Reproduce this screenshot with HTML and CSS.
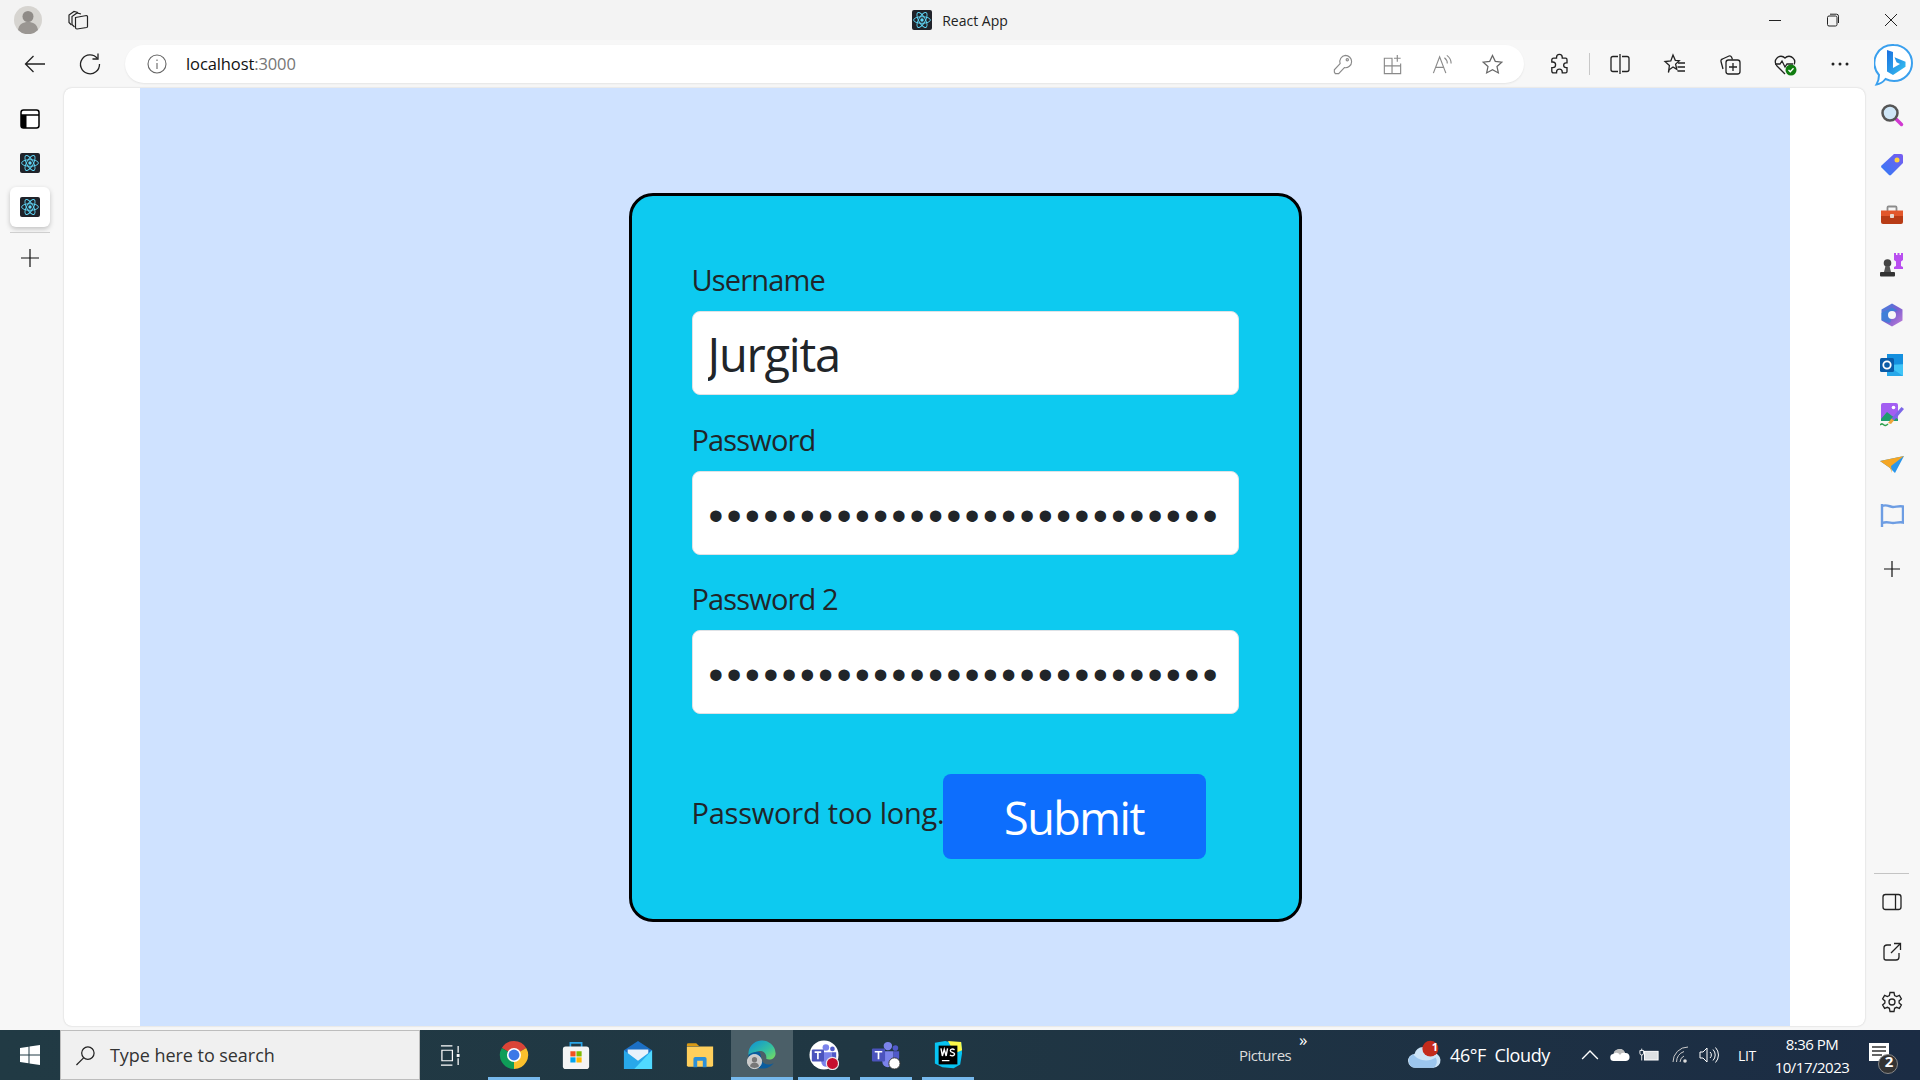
FILE: index.html
```html
<!DOCTYPE html>
<html lang="en">
<head>
<meta charset="utf-8">
<title>React App</title>
<link rel="stylesheet" href="styles.css">
</head>
<body>
<svg class="defs" width="0" height="0" aria-hidden="true">
  <defs>
    <symbol id="react" viewBox="0 0 20 20">
      <rect width="20" height="20" rx="2" fill="#20232a"/>
      <g fill="none" stroke="#61dafb" stroke-width=".9">
        <ellipse cx="10" cy="10" rx="8.4" ry="3.3"/>
        <ellipse cx="10" cy="10" rx="8.4" ry="3.3" transform="rotate(60 10 10)"/>
        <ellipse cx="10" cy="10" rx="8.4" ry="3.3" transform="rotate(120 10 10)"/>
      </g>
      <circle cx="10" cy="10" r="1.7" fill="#61dafb"/>
    </symbol>
    <linearGradient id="bingG" x1="0" y1="0" x2="1" y2="1"><stop offset="0" stop-color="#1b6fe0"/><stop offset="1" stop-color="#36c5f0"/></linearGradient>
    <linearGradient id="edgeG" x1="0" y1="0" x2="1" y2="1"><stop offset="0" stop-color="#0c8fd8"/><stop offset=".6" stop-color="#35c1a0"/><stop offset="1" stop-color="#7fdc5a"/></linearGradient>
    <linearGradient id="mGrad" x1="0" y1="0" x2="1" y2="1"><stop offset="0" stop-color="#3a86e0"/><stop offset=".5" stop-color="#7a5fd0"/><stop offset="1" stop-color="#c57fd8"/></linearGradient>
    <linearGradient id="tagG" x1="0" y1="1" x2="1" y2="0"><stop offset="0" stop-color="#2f7cf6"/><stop offset="1" stop-color="#7a5cf0"/></linearGradient>
  </defs>
</svg>

<header class="titlebar">
  <div class="title-side">
    <svg class="avatar" viewBox="0 0 28 28"><circle cx="14" cy="14" r="14" fill="#d6d4d0"/><circle cx="14" cy="10.5" r="5.5" fill="#8f8b87"/><path d="M4 24c1-6 5-8 10-8s9 2 10 8a14 14 0 0 1-20 0z" fill="#9a9692"/></svg>
    <svg class="ico tabs" viewBox="0 0 24 24" fill="none" stroke="#222" stroke-width="1.2"><path d="M5.500 17 3 14.500V7l5-3.500 4 1"/><path d="M8.500 19 6 16.500V8.500l5-3.500 4 1"/><path d="M9.500 9.500 20.500 7.500a1 1 0 0 1 1 1V18.500a1 1 0 0 1-.8 1L11 21a1.500 1.500 0 0 1-1.500-1.500z" fill="#f3f3f3"/></svg>
  </div>
  <div class="title-center">
    <svg class="fav"><use href="#react"/></svg>
    <span class="title-text">React App</span>
  </div>
  <div class="title-side title-right">
    <svg class="win-btn" viewBox="0 0 14 14" fill="none" stroke="#222" stroke-width="1"><path d="M1 7.500h12"/></svg>
    <svg class="win-btn" viewBox="0 0 14 14" fill="none" stroke="#222" stroke-width="1"><rect x="1.500" y="3" width="9.500" height="10" rx="1.500"/><path d="M4 1.200h6.500a2 2 0 0 1 2 2V10"/></svg>
    <svg class="win-btn" viewBox="0 0 14 14" fill="none" stroke="#222" stroke-width="1"><path d="M1 1l12 12M13 1 1 13"/></svg>
  </div>
</header>

<nav class="toolbar">
  <span class="tool"><svg class="ico" viewBox="0 0 24 24" fill="none" stroke="#222" stroke-width="1.300"><path d="M22 12H2.500M10.500 4l-8 8 8 8"/></svg></span>
  <span class="tool"><svg class="ico" viewBox="0 0 24 24" fill="none" stroke="#222" stroke-width="1.300"><path d="M19.500 6.500A9.500 9.500 0 1 0 21.500 12"/><path d="M20 1.500v5.500h-5.500"/></svg></span>
  <div class="address">
    <svg class="ico info" viewBox="0 0 20 20" fill="none" stroke="#666" stroke-width="1.100"><circle cx="10" cy="10" r="9"/><path d="M10 9v6M10 5.500v1.500"/></svg>
    <span class="url">localhost<span class="url-port">:3000</span></span>
    <span class="address-tools">
      <svg class="ico" viewBox="0 0 24 24" fill="none" stroke="#8a8a8a" stroke-width="1.200"><path d="M15 2.500a6.500 6.500 0 0 1 6.500 6.500 6.500 6.500 0 0 1-7.500 6.300L8 21.500H4.500L3.500 20v-2.500l6-6.500A6.500 6.500 0 0 1 15 2.500z"/><circle cx="17" cy="7" r="1.200"/></svg>
      <svg class="ico" viewBox="0 0 24 24" fill="none" stroke="#8a8a8a" stroke-width="1.200"><path d="M3.500 5.500h8v16h-8zM3.500 13.500h17v8h-9M11.500 13.500v8M20.500 13.500V11M17 2v7M13.500 5.500h7"/></svg>
      <svg class="ico" viewBox="0 0 24 24" fill="none" stroke="#8a8a8a" stroke-width="1.200"><path d="M2.500 21 9 4l6.500 17M5 15h8M14 5c2 1.500 3 3.500 3 6M16.500 2.500c3 2 4.500 5 4.500 8.500"/></svg>
      <svg class="ico" viewBox="0 0 24 24" fill="none" stroke="#666" stroke-width="1.300"><path d="m12 2.500 2.900 6.200 6.800.8-5 4.600 1.400 6.700L12 17.500l-6.100 3.300 1.400-6.700-5-4.600 6.800-.8z"/></svg>
    </span>
  </div>
  <span class="tool tool-first"><svg class="ico" viewBox="0 0 24 24" fill="none" stroke="#222" stroke-width="1.400"><path d="M9 6V5a3 3 0 0 1 6 0v1h3.500a1.500 1.500 0 0 1 1.500 1.500V11h-1a2.500 2.500 0 0 0 0 5h1v4a1.500 1.500 0 0 1-1.500 1.500h-3.500v-1a3 3 0 0 0-6 0v1H6a2 2 0 0 1-2-2v-3.500h1a3 3 0 0 0 0-6H4V8a2 2 0 0 1 2-2z" transform="translate(0 0.500) scale(.95)"/></svg></span>
  <span class="tool-sep"></span>
  <span class="tool"><svg class="ico" viewBox="0 0 24 24" fill="none" stroke="#222" stroke-width="1.300"><path d="M10 4.500H5a2 2 0 0 0-2 2v11a2 2 0 0 0 2 2h5M14 4.500h5a2 2 0 0 1 2 2v11a2 2 0 0 1-2 2h-5M12 2v20"/></svg></span>
  <span class="tool"><svg class="ico" viewBox="0 0 24 24" fill="none" stroke="#222" stroke-width="1.300"><path d="m10 3 2.300 5.300 4 .4-3.700 3.400 1.200 5.300L10 15l-3.800 2.800-.8 2.700 1-7-4.400-4 5.800-.6z"/><path d="M15 11h7M14.500 15h7.500M14.500 19h7.500"/></svg></span>
  <span class="tool"><svg class="ico" viewBox="0 0 24 24" fill="none" stroke="#222" stroke-width="1.300"><path d="M5 17 3 9.500A2 2 0 0 1 4.500 7L11 4a2 2 0 0 1 2.500 1l1 2.500"/><rect x="8" y="8" width="14" height="14" rx="2.500"/><path d="M15 11v8M11 15h8"/></svg></span>
  <span class="tool"><svg class="ico" viewBox="0 0 24 24" fill="none" stroke="#222" stroke-width="1.300"><path d="M12 22 4 14a5.500 5.500 0 0 1 0-8 5.500 5.500 0 0 1 8 0 5.500 5.500 0 0 1 8 0 5.500 5.500 0 0 1 1 6.500"/><path d="M2 12h5l2-3 3 6 2-3h6"/><circle cx="18" cy="18" r="5.500" fill="#107c10" stroke="none"/><path d="m15.500 18 1.800 1.800 3.200-3.500" stroke="#fff"/></svg></span>
  <span class="tool"><svg class="ico" viewBox="0 0 24 24" fill="#222"><circle cx="5" cy="12" r="1.500"/><circle cx="12" cy="12" r="1.500"/><circle cx="19" cy="12" r="1.500"/></svg></span>
  <span class="bing"><svg class="bing-ico" viewBox="0 0 40 46"><path d="M20 2a18 18 0 0 1 0 36c-3 0-6-.8-8.500-2-2 2.500-5 5-9 5.500 1.500-2.500 2.500-6 2.500-9.500A18 18 0 0 1 20 2z" fill="#fff" stroke="#3aa0ee" stroke-width="2"/><path d="M13 7l6 2v16l7-4-3.500-1.700-2-5 11 4.500v5L19 32l-6-3.500z" fill="url(#bingG)"/></svg></span>
</nav>

<main class="workspace">
  <aside class="tabrail">
    <span class="rail-item"><svg class="ico" viewBox="0 0 24 24"><rect x="3" y="3" width="18" height="18" rx="2.500" fill="#fff" stroke="#000" stroke-width="1.500"/><path d="M3 8h18" stroke="#000" stroke-width="1.500"/><path d="M3 8h5.500v13H5.500A2.500 2.500 0 0 1 3 18.500z" fill="#000"/></svg></span>
    <span class="rail-item"><svg class="rail-fav"><use href="#react"/></svg></span>
    <span class="rail-item rail-active"><svg class="rail-fav"><use href="#react"/></svg></span>
    <span class="rail-sep"></span>
    <span class="rail-item rail-plus"><svg class="ico" viewBox="0 0 24 24" stroke="#111" stroke-width="1.200"><path d="M12 3v18M3 12h18"/></svg></span>
  </aside>

  <div class="page">
    <div class="page-bg">
      <form class="card">
        <label class="field-label" for="user">Username</label>
        <input class="field field-text" id="user" type="text" value="Jurgita">
        <label class="field-label" for="pw1">Password</label>
        <input class="field field-pw" id="pw1" type="password" value="aaaaaaaaaaaaaaaaaaaaaaaaaaaa">
        <label class="field-label" for="pw2">Password 2</label>
        <input class="field field-pw" id="pw2" type="password" value="aaaaaaaaaaaaaaaaaaaaaaaaaaaa">
        <div class="actions">
          <span class="err">Password too long.</span>
          <button class="submit" type="button">Submit</button>
        </div>
      </form>
    </div>
  </div>

  <aside class="siderail">
    <span class="side-item"><svg class="ico" viewBox="0 0 24 24"><path d="m14.500 14.500 7 7" stroke="#d13ad1" stroke-width="3.500" stroke-linecap="round"/><circle cx="10" cy="10" r="7.500" fill="#cfe6f7" stroke="#555" stroke-width="2.500"/></svg></span>
    <span class="side-item"><svg class="ico" viewBox="0 0 24 24"><path d="M14 1h7a2 2 0 0 1 2 2v7L11 22a1.500 1.500 0 0 1-2 0l-7.500-7.500a1.500 1.500 0 0 1 0-2z" fill="url(#tagG)"/><circle cx="17" cy="7" r="2.500" fill="#ffd23f"/></svg></span>
    <span class="side-item"><svg class="ico" viewBox="0 0 24 24"><path d="M7.500 8V4.500a1 1 0 0 1 1-1h7a1 1 0 0 1 1 1V8" fill="none" stroke="#8c8c8c" stroke-width="1.800"/><path d="M1 7.500h22v6H1z" fill="#e2572b"/><path d="M1 13h22v6a2 2 0 0 1-2 2H3a2 2 0 0 1-2-2z" fill="#b83c16"/><rect x="10" y="11" width="4" height="4" rx=".8" fill="#e8d9cf"/></svg></span>
    <span class="side-item"><svg class="ico" viewBox="0 0 24 24"><path d="M14 0h2v2h1.500V0h2v2H21V0h2v7l-2 1.500V13l2 1v2h-9v-2l2-1V8.500L14 7z" fill="#b94ef0"/><circle cx="7.500" cy="10" r="3.800" fill="#444"/><path d="M5.500 13h4L11 19H4z" fill="#555"/><rect x="0" y="19" width="15" height="4.500" rx="1" fill="#333"/></svg></span>
    <span class="side-item"><svg class="ico" viewBox="0 0 24 24"><path d="M12 .5 22.500 6.500v11L12 23.500 1.500 17.500v-11z" fill="url(#mGrad)"/><path d="M1.500 10 12 4.500 18 7.500a7 7 0 0 0-7 4.500c-1 5 1 7-2 8l-7.500-3z" fill="#2f88d8" opacity=".7"/><circle cx="12" cy="12" r="4" fill="#f7f7f7"/></svg></span>
    <span class="side-item"><svg class="ico" viewBox="0 0 24 24"><path d="M7 1h16v22H7z" fill="#1490df"/><path d="M7 12h16v11H7z" fill="#28a8ea"/><path d="m7 12 16-1v12z" fill="#50d9ff" opacity=".6"/><rect x="0" y="5" width="14" height="14" rx="1.500" fill="#0a5ca8"/><circle cx="7" cy="12" r="3.700" fill="none" stroke="#fff" stroke-width="1.800"/></svg></span>
    <span class="side-item"><svg class="ico" viewBox="0 0 24 24"><rect x="1" y="0" width="17" height="18" rx="2" fill="#a35ef2"/><path d="M1 16l6-7 5 4 6 3v2H1z" fill="#1f9e6e"/><circle cx="13.500" cy="4.500" r="1.800" fill="#fff"/><path d="m24 6-10 11.500-2.500-2L21.500 4z" fill="#7c66e8"/><path d="M11.500 15.500 14 17.500l-3 3.500-3-1z" fill="#f0a63a"/><path d="M0 22c2-2 3-1 4 0s3 0 4-1" fill="none" stroke="#2fa24f" stroke-width="1.500"/></svg></span>
    <span class="side-item"><svg class="ico" viewBox="0 0 24 24"><path d="M0 8 24 3 15 20l-5-5z" fill="#2a96ea"/><path d="M0 8 24 3 11 13l1 7-2-5z" fill="#f5a623"/></svg></span>
    <span class="side-item"><svg class="ico" viewBox="0 0 24 24" fill="none" stroke="#6d9de3" stroke-width="2.400"><path d="M2 24V1"/><path d="M2 3c5-2 8 1 11 1s6-1.500 10-.5v16c-4-1-7 .5-10 .5s-6-2-11 0"/></svg></span>
    <span class="side-item side-plus"><svg class="ico" viewBox="0 0 24 24" stroke="#111" stroke-width="1.200"><path d="M12 4v16M4 12h16"/></svg></span>
    <span class="side-rule"></span>
    <span class="side-item"><svg class="ico" viewBox="0 0 24 24" fill="none" stroke="#222" stroke-width="1.300"><rect x="3" y="4.500" width="18" height="15" rx="2.500"/><path d="M15.500 4.500v15"/></svg></span>
    <span class="side-item"><svg class="ico" viewBox="0 0 24 24" fill="none" stroke="#222" stroke-width="1.300"><path d="M11 5H7a3 3 0 0 0-3 3v10a2 2 0 0 0 2 2h10a3 3 0 0 0 3-3v-4"/><path d="M11 13 20 4M14 3.500h6.500V10"/></svg></span>
    <span class="side-item"><svg class="ico" viewBox="0 0 24 24" fill="none" stroke="#222" stroke-width="1.300"><circle cx="12" cy="12" r="3"/><path d="M10 2.500h4l.6 3 2 1 2.800-1.100 2 3.500-2.300 2v2l2.300 2-2 3.500-2.800-1.100-2 1-.6 3.200h-4l-.6-3.200-2-1-2.800 1.100-2-3.500 2.300-2v-2l-2.300-2 2-3.500 2.800 1.100 2-1z"/></svg></span>
  </aside>
</main>

<footer class="taskbar">
  <span class="start"><svg class="start-ico" viewBox="0 0 20 20" fill="#fff"><path d="M0 3l8.500-1.300V9.500H0zM9.500 1.500 20 0v9.500H9.500zM0 10.500h8.500v7.800L0 17zM9.500 10.500H20V20l-10.500-1.500z"/></svg></span>
  <div class="search">
    <svg class="search-ico" viewBox="0 0 22 22" fill="none" stroke="#222" stroke-width="1.300"><circle cx="13.500" cy="8.500" r="6.500"/><path d="M9 13.500 1.500 21"/></svg>
    <span class="search-text">Type here to search</span>
  </div>
  <span class="taskview"><svg class="ico" viewBox="0 0 22 22" fill="none" stroke="#fff" stroke-width="1.300"><path d="M1 1h12M1 21h12M2 5.500h11v11H2zM19 1v7M19 14v7"/><rect x="17.500" y="9.500" width="3" height="3" fill="#fff" stroke="none"/></svg></span>

  <span class="app app-open"><svg class="app-ico" viewBox="0 0 32 32"><path d="M16 16 3 8.500A15 15 0 0 1 29 8.500z" fill="#db4437"/><path d="M16 16 3 8.500A15 15 0 0 0 16 31z" fill="#0f9d58"/><path d="M16 16V31A15 15 0 0 0 29 8.500z" fill="#fbc02d"/><circle cx="16" cy="16" r="7.500" fill="#fff"/><circle cx="16" cy="16" r="5.800" fill="#3b78e7"/></svg></span>
  <span class="app"><svg class="app-ico" viewBox="0 0 32 32"><path d="M10 8V3h12v5" fill="none" stroke="#2aa5e8" stroke-width="1.800"/><rect x="2" y="7" width="28" height="24" rx="3" fill="#f4f4f4"/><rect x="10" y="12" width="5.500" height="5.500" fill="#f25022"/><rect x="16.500" y="12" width="5.500" height="5.500" fill="#7fba00"/><rect x="10" y="18.500" width="5.500" height="5.500" fill="#00a4ef"/><rect x="16.500" y="18.500" width="5.500" height="5.500" fill="#ffb900"/></svg></span>
  <span class="app"><svg class="app-ico" viewBox="0 0 32 32"><path d="M1 11 16 1l15 10v20H1z" fill="#1c6fc4"/><path d="M5 10h22v7l-11 7-11-7z" fill="#e8f2fb"/><path d="M1 11v20h30V11L16 22z" fill="#28a8ea"/><path d="M31 11v20H12z" fill="#50d9ff"/></svg></span>
  <span class="app"><svg class="app-ico" viewBox="0 0 32 32"><path d="M2 5a1.500 1.500 0 0 1 1.500-1.500H12l3 3h-13z" fill="#d99a15"/><path d="M2 7h28v20a1.500 1.500 0 0 1-1.500 1.500h-25A1.500 1.500 0 0 1 2 27z" fill="#ffcf5c"/><path d="M9 29V20a2 2 0 0 1 2-2h10a2 2 0 0 1 2 2v9h-4v-7h-6v7z" fill="#2b8fd8"/></svg></span>
  <span class="app app-active"><svg class="app-ico" viewBox="0 0 32 32"><path d="M1.500 16A14.500 14.500 0 0 1 30.500 14c0 6-6 8-10 6 1-5-3-9-8-8-6 1-10.500 4-11 4z" fill="url(#edgeG)"/><path d="M1.500 16c.5 8 7 14.500 14.500 14.500 6 0 10-2.500 12.500-6-5 3-12 2-13-4-1-4-1-8-3-8-5 0-10.500 2-11 3.500z" fill="#0a5c9e"/><circle cx="8" cy="23" r="7.500" fill="#c9c9c9" stroke="#ddd"/><circle cx="8" cy="21" r="2.800" fill="#777"/><path d="M3 28c1-3 3-4 5-4s4 1 5 4a7.500 7.500 0 0 1-10 0z" fill="#777"/></svg></span>
  <span class="app app-open"><svg class="app-ico" viewBox="0 0 32 32"><circle cx="16" cy="16" r="15.500" fill="#fff"/><circle cx="18" cy="8" r="3.500" fill="#7b83eb"/><circle cx="25" cy="9.500" r="2.500" fill="#5059c9"/><path d="M13 13h11v10a5.500 5.500 0 0 1-11 0z" fill="#7b83eb"/><path d="M24 13h5v6a3 3 0 0 1-5 2z" fill="#5059c9"/><rect x="3" y="10" width="13" height="13" rx="1.200" fill="#4b53bc"/><path d="M6 13h7M9.500 13v7.500" stroke="#fff" stroke-width="1.800"/><circle cx="25" cy="25" r="6.500" fill="#c50f2e" stroke="#e6e6e6" stroke-width="1.300"/></svg></span>
  <span class="app app-open"><svg class="app-ico" viewBox="0 0 32 32"><circle cx="18" cy="6.500" r="4.500" fill="#7b83eb"/><circle cx="26" cy="8.500" r="3" fill="#5059c9"/><path d="M12 12h12v11a6 6 0 0 1-12 0z" fill="#7b83eb"/><path d="M24 12h6v7a3.500 3.500 0 0 1-6 2z" fill="#5059c9"/><rect x="1" y="9" width="14" height="14" rx="1.200" fill="#4b53bc"/><path d="M4 12.500h8M8 12.500v8" stroke="#fff" stroke-width="1.800"/><circle cx="25" cy="25" r="6" fill="#fff" stroke="#333" stroke-width="1"/></svg></span>
  <span class="app app-open"><svg class="app-ico" viewBox="0 0 32 32"><path d="M2 3 13 1l8 2 9-1 1 12-2 12-7 4-12-1-8-4z" fill="#07c3f2"/><path d="M16 1l14 1 1 9-8 3z" fill="#fcf84a"/><rect x="6" y="6" width="20" height="20" fill="#000"/><path d="M9.500 22h8" stroke="#fff" stroke-width="1.300"/><path d="m8.500 9 1.500 8 2-7 2 7 1.500-8M23 10.500c-2-1.500-4.500-1-4.500 1s4.500 1.500 4.500 3.500-3 2.500-5 1" fill="none" stroke="#fff" stroke-width="1.500"/></svg></span>

  <span class="bar-fill"></span>
  <span class="tray-pictures">Pictures</span>
  <span class="tray-chev">»</span>
  <span class="tray-cloud"><svg class="cloud-ico" viewBox="0 0 32 28"><path d="M8 26a6.500 6.500 0 0 1-1-13A9 9 0 0 1 24 12a7 7 0 0 1 1 14z" fill="#cde4f7"/><path d="M8 26a6.500 6.500 0 0 1-2-12.600c4 6 14 8 21 3A7 7 0 0 1 25 26z" fill="#9cc6ee"/><circle cx="22" cy="8" r="7.500" fill="#c42b1c"/></svg><span class="cloud-badge">1</span></span>
  <span class="tray-weather">46°F&nbsp; Cloudy</span>
  <span class="tray-caret"><svg class="tray-small" viewBox="0 0 16 16" fill="none" stroke="#fff" stroke-width="1.200"><path d="m1 11.500 7-7 7 7"/></svg></span>
  <span class="tray-icon tray-drive"><svg class="tray-small" viewBox="0 0 20 16"><path d="M4 14a3.500 3.500 0 0 1-.5-7A6 6 0 0 1 15 6a4 4 0 0 1 1 8z" fill="#fff"/><path d="M3.500 7A6 6 0 0 1 15 6a4 4 0 0 0-5 2 4 4 0 0 0-6.500-1z" fill="#bbb"/></svg></span>
  <span class="tray-icon tray-batt"><svg class="tray-small" viewBox="0 0 22 16" fill="none" stroke="#fff"><rect x="6" y="4" width="15" height="9.500" fill="#fff" fill-opacity=".85" stroke-width="1.100"/><path d="M3 1v2M1 3h4v3a2 2 0 0 1-4 0zM3 8v6" stroke-width="1"/></svg></span>
  <span class="tray-icon tray-wifi"><svg class="tray-small" viewBox="0 0 18 18" fill="none" stroke="#ccc" stroke-width="1"><path d="M1 16A15 15 0 0 1 16 1M4.500 16A11.500 11.500 0 0 1 12 5.500M8 16a7 7 0 0 1 4-6"/><circle cx="13" cy="15" r="1.800" fill="#ddd" stroke="none"/></svg></span>
  <span class="tray-icon tray-sound"><svg class="tray-small" viewBox="0 0 20 18" fill="none" stroke="#fff" stroke-width="1"><path d="M1 6h3l4-4v14l-4-4H1zM11 6a4 4 0 0 1 0 6M14 3.500a8 8 0 0 1 0 11M16.500 1.500a11 11 0 0 1 0 15"/></svg></span>
  <span class="tray-lang">LIT</span>
  <span class="tray-clock"><span>8:36 PM</span><span>10/17/2023</span></span>
  <span class="tray-notif"><svg class="notif-ico" viewBox="0 0 34 34"><path d="M2 3h20v18H2z" fill="#fff"/><path d="M5 7h14M5 11h14M5 15h10" stroke="#333" stroke-width="1.500"/><circle cx="21" cy="24" r="9.500" fill="#333" stroke="#888"/></svg><span class="notif-badge">2</span></span>
</footer>
</body>
</html>
```

FILE: styles.css
```css
* { box-sizing: border-box; }
html, body { margin: 0; height: 100%; }
body {
  width: 1920px; height: 1080px; overflow: hidden;
  display: flex; flex-direction: column;
  font-family: "Open Sans", "Noto Sans", sans-serif;
  background: #f7f7f7; color: #212529;
}
.defs { position: absolute; }
.ico { width: 24px; height: 24px; display: block; }

/* title bar */
.titlebar { height: 40px; flex: none; background: #f3f3f3; display: flex; align-items: center; }
.title-side { flex: 1; display: flex; align-items: center; }
.avatar { width: 28px; height: 28px; margin-left: 14px; }
.tabs { margin-left: 24px; }
.title-center { display: flex; align-items: center; gap: 10px; margin-left: 22px; }
.fav { width: 20px; height: 20px; }
.title-text { font-size: 14px; color: #222; }
.title-right { justify-content: flex-end; padding-right: 22px; gap: 44px; }
.win-btn { width: 14px; height: 14px; }

/* toolbar */
.toolbar { height: 48px; flex: none; background: #f7f7f7; display: flex; align-items: center; padding-left: 7px; }
.tool { width: 55px; height: 40px; display: flex; align-items: center; justify-content: center; flex: none; }
.tool-first { margin-left: 8px; }
.tool-sep { width: 1px; height: 22px; background: #c8c8c8; margin: 0 2px; flex: none; }
.address {
  width: 1399px; height: 38px; margin-left: 8px; flex: none;
  background: #fff; border-radius: 19px;
  box-shadow: 0 1px 2px rgba(0,0,0,.08);
  display: flex; align-items: center; padding-left: 22px;
}
.info { width: 20px; height: 20px; }
.url { margin-left: 19px; padding-bottom: 2px; font-size: 16.500px; letter-spacing: -.1px; color: #111; }
.url-port { color: #767676; }
.address-tools { margin-left: auto; display: flex; gap: 27px; padding-right: 20px; }
.address-tools .ico { width: 23px; height: 23px; }
.bing { width: 50px; display: flex; justify-content: center; flex: none; padding-left: 4px; }
.bing-ico { width: 40px; height: 46px; margin-top: 4px; }

/* workspace */
.workspace { height: 942px; flex: none; display: flex; }
.tabrail { width: 64px; flex: none; display: flex; flex-direction: column; gap: 4px; padding: 11px 0 0 10px; }
.rail-item { width: 40px; height: 40px; display: flex; align-items: center; justify-content: center; }
.rail-fav { width: 20px; height: 20px; }
.rail-active { background: #fff; border-radius: 6px; box-shadow: 0 2px 5px rgba(0,0,0,.22); }
.rail-sep { width: 40px; height: 1px; background: #cfcfcf; margin-top: 1px; }
.rail-plus { margin-top: 1px; }

.page { width: 1801px; height: 938px; flex: none; background: #fff; border-radius: 8px; padding: 0 75px 0 76px; box-shadow: 0 0 2px rgba(0,0,0,.2); overflow: hidden; }
.page-bg { height: 100%; background: #cfe2ff; padding-top: 105px; display: flex; justify-content: center; align-items: flex-start; }
.card {
  width: 673px; height: 729px; background: #0dcaf0;
  border: 3px solid #000; border-radius: 24px;
  padding: 64px 60px 0;
  display: flex; flex-direction: column;
}
.field-label { font-size: 29px; line-height: 39px; height: 42px; margin-bottom: 9px; letter-spacing: -.85px; }
.field {
  width: 547px; height: 84px; flex: none; display: block;
  background: #fff; border: 1px solid #dee2e6; border-radius: 8px;
  padding: 0 15px; color: #212529; outline: 0;
  font-family: "Open Sans", sans-serif;
}
.field + .field-label { margin-top: 24.500px; }
.field-text { font-size: 47px; letter-spacing: -1.200px; padding-top: 1px; }
.field-pw { font-family: "Liberation Sans", sans-serif; font-size: 42px; letter-spacing: 3.600px; padding: 6px 12px 0 16px; }
.actions { margin-top: 60px; display: flex; align-items: center; }
.err { font-size: 29px; letter-spacing: -.22px; white-space: nowrap; width: 251px; flex: none; position: relative; top: -4px; }
.submit {
  width: 263px; height: 85px; border: 0; border-radius: 8px;
  background: #0d6efd; color: #fff;
  font-family: "Open Sans", sans-serif; font-size: 45px; letter-spacing: -1.500px;
  padding: 2px 0 0;
}

.siderail { width: 55px; flex: none; display: flex; flex-direction: column; padding: 2px 2px 3px 0; align-items: center; }
.side-item { width: 50px; height: 50px; flex: none; display: flex; align-items: center; justify-content: center; }
.side-plus { margin-top: 4px; }
.side-rule { width: 35px; height: 1px; background: #c4c4c4; margin-top: auto; margin-bottom: 3px; }

/* taskbar */
.taskbar {
  height: 50px; flex: none; display: flex; align-items: center; color: #fff;
  background: linear-gradient(90deg, #213a44 0%, #203743 45%, #1b2c44 100%);
}
.start { width: 60px; height: 50px; display: flex; align-items: center; justify-content: center; flex: none; }
.start-ico { width: 20px; height: 20px; }
.search { width: 360px; height: 50px; flex: none; background: #f0f0f0; border: 1px solid #bdbdbd; display: flex; align-items: center; padding-left: 14px; color: #333; }
.search-ico { width: 21px; height: 21px; }
.search-text { margin-left: 14px; font-size: 18px; letter-spacing: -.05px; }
.taskview { width: 60px; height: 50px; flex: none; display: flex; align-items: center; justify-content: center; }
.taskview .ico { width: 21px; height: 21px; }
.app { width: 62px; height: 50px; flex: none; display: flex; align-items: center; justify-content: center; position: relative; }
.taskview + .app { margin-left: 3px; }
.app-ico { width: 30px; height: 30px; }
.app-open::after { content: ""; position: absolute; left: 5px; right: 5px; bottom: 0; height: 3px; background: #76b9ed; }
.app-active { background: #4b5f68; }
.app-active::after { content: ""; position: absolute; left: 0; right: 0; bottom: 0; height: 3px; background: #76b9ed; }

.bar-fill { flex: 1; }
.tray-pictures { width: 60px; flex: none; font-size: 15px; letter-spacing: -.5px; color: #ddd; white-space: nowrap; }
.tray-chev { width: 14px; flex: none; align-self: flex-start; font-size: 17px; line-height: 20px; color: #fff; }
.tray-cloud { width: 36px; height: 32px; flex: none; margin-left: 94px; position: relative; display: flex; align-items: center; }
.cloud-ico { width: 34px; height: 30px; }
.cloud-badge { position: absolute; top: 0; left: 20px; width: 16px; text-align: center; font-size: 11px; line-height: 16px; font-weight: 700; color: #fff; }
.tray-weather { width: 101px; margin-left: 7px; flex: none; font-size: 18px; letter-spacing: -.4px; white-space: nowrap; }
.tray-caret { width: 24px; margin-left: 27px; flex: none; display: flex; justify-content: center; }
.tray-small { width: 20px; height: 18px; display: block; }
.tray-icon { flex: none; display: flex; justify-content: center; }
.tray-drive { width: 30px; margin-left: 3px; }
.tray-batt { width: 28px; }
.tray-wifi { width: 36px; }
.tray-sound { width: 20px; }
.tray-lang { width: 28px; margin: 0 -4px 0 14px; flex: none; text-align: center; font-size: 14px; letter-spacing: -.3px; }
.tray-clock { width: 110px; flex: none; display: flex; flex-direction: column; align-items: center; gap: 3px; font-size: 15px; line-height: 20px; letter-spacing: -.5px; }
.tray-notif { width: 40px; height: 40px; flex: none; position: relative; display: flex; align-items: center; margin-right: 13px; }
.notif-ico { width: 34px; height: 34px; margin-top: 4px; }
.notif-badge { position: absolute; left: 15px; top: 16px; width: 14px; text-align: center; font-size: 15px; line-height: 20px; font-weight: 700; color: #fff; }
```
